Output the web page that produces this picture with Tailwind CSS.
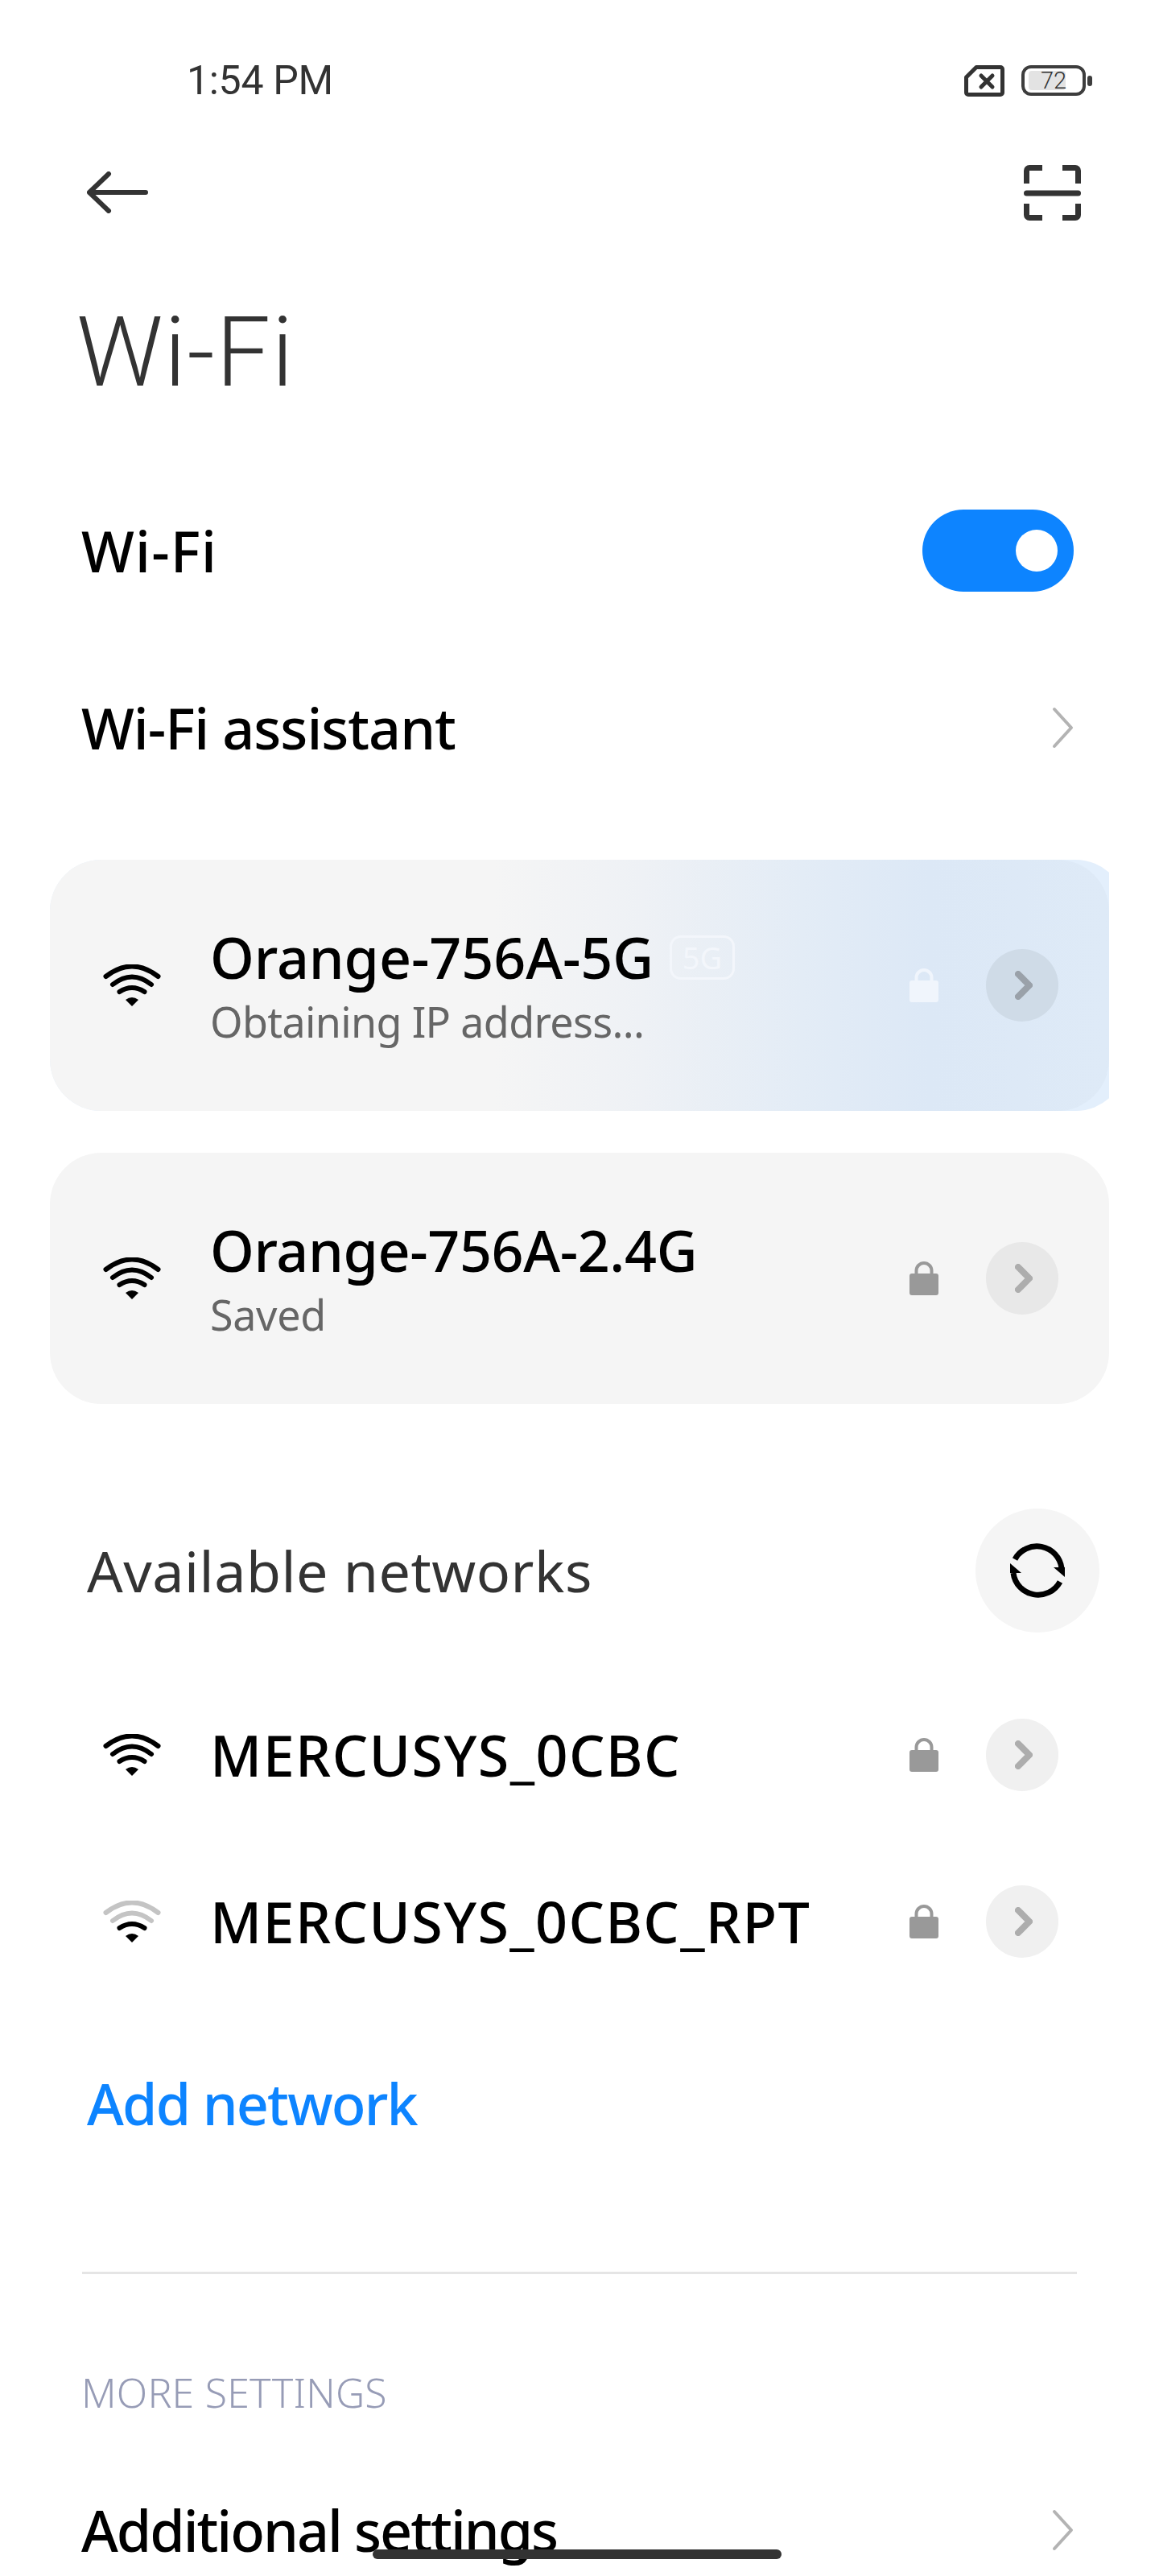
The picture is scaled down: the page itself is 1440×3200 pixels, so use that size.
<!DOCTYPE html>
<html lang="en">
<head>
<meta charset="UTF-8">
<title>Wi-Fi</title>
<script src="https://cdn.jsdelivr.net/npm/@tailwindcss/browser@4"></script>
</head>
<body class="bg-white">
<div class="relative w-[1440px] h-[3200px] overflow-hidden bg-white font-['Noto_Sans',sans-serif] text-black">

  <!-- status bar -->
  <div class="flex items-center justify-between h-[200px] pl-[232px] pr-[83px]">
    <span class="font-['Roboto',sans-serif] text-[50px] leading-none tracking-[-0.3px] text-[#333]">1:54 PM</span>
    <div class="flex items-center gap-[21px]">
      <svg width="50" height="39" viewBox="0 0 50 39" fill="none" stroke="#333" stroke-width="5"><path d="M15 2.500H45a2.500 2.500 0 0 1 2.500 2.500V34a2.500 2.500 0 0 1-2.500 2.500H5A2.500 2.500 0 0 1 2.500 34V15Z" stroke-linejoin="round"/><path d="M21 13L35 27M35 13L21 27" stroke-linecap="round"/></svg>
      <div class="flex items-center gap-[2px]">
        <div class="relative w-[80px] h-[38px] rounded-[12px] border-[4px] border-[#3d3d3d]">
          <div class="absolute left-[5px] top-[3px] w-[46px] h-[24px] rounded-[4px] bg-[#e3e3e3]"></div>
          <span class="absolute left-[20px] top-0 h-[30px] font-['Roboto',sans-serif] font-light text-[29px] leading-[30px] text-[#333]">72</span>
        </div>
        <div class="w-[6px] h-[13px] rounded-full bg-[#3d3d3d]"></div>
      </div>
    </div>
  </div>

  <!-- toolbar -->
  <div class="flex items-center justify-between h-[78px] pl-[108px] pr-[97px]">
    <svg width="76" height="52" viewBox="0 0 76 52" fill="none" stroke="#333" stroke-width="6" stroke-linecap="round" stroke-linejoin="round"><path d="M3 26H73M27 3L3 26L27 49"/></svg>
    <svg width="71" height="69" viewBox="0 0 71 69" fill="none" stroke="#333" stroke-width="7"><path d="M23 3.500H7a3.500 3.500 0 0 0-3.500 3.500V23M48 3.500H64a3.500 3.500 0 0 1 3.500 3.500V23M23 65.500H7a3.500 3.500 0 0 1-3.500-3.500V48M48 65.500H64a3.500 3.500 0 0 0 3.500-3.500V48"/><path d="M3.500 35H67.500" stroke-linecap="round"/></svg>
  </div>

  <!-- title -->
  <div class="h-[296px] pt-[88px] pl-[95px]">
    <h1 class="font-['Roboto',sans-serif] font-light text-[120px] leading-[144px] tracking-[1.500px] text-[#333]">Wi-Fi</h1>
  </div>

  <!-- wifi toggle -->
  <div class="flex items-center justify-between h-[220px] pl-[101px] pr-[106px]">
    <span class="text-[70px] leading-none font-medium tracking-[1.200px]">Wi-Fi</span>
    <div class="flex items-center justify-end w-[188px] h-[102px] pr-[20px] rounded-full bg-[#0d84ff]">
      <div class="w-[52px] h-[52px] rounded-full bg-white"></div>
    </div>
  </div>

  <!-- assistant -->
  <div class="flex items-center justify-between h-[220px] pl-[101px] pr-[106px]">
    <span class="text-[70px] leading-none font-medium tracking-[-1px]">Wi-Fi assistant</span>
    <svg width="27" height="52" viewBox="0 0 27 52" fill="none" stroke="#b3b3b3" stroke-width="4" stroke-linecap="round" stroke-linejoin="round"><path d="M3 3L24 26L3 49"/></svg>
  </div>

  <!-- connecting network -->
  <div class="relative ml-[62px] mt-[54px] w-[1316px] h-[312px] overflow-hidden">
    <div class="absolute inset-y-0 left-0 right-[-22px] rounded-[64px] bg-[#e3effc]"></div>
    <div class="absolute inset-0 rounded-[64px] bg-[linear-gradient(90deg,#f5f5f5_0%,#f5f5f5_42%,#eef1f5_56%,#e3ecf6_71%,#dce8f6_83%,#deeaf7_100%)]"></div>
    <div class="relative flex items-center h-full pl-[66px] pr-[63px]">
      <svg class="shrink-0" width="72" height="52" viewBox="0 0 72 52" fill="none" stroke="#000" stroke-width="6" stroke-linecap="round"><path d="M3.500 15Q36 -10 68.500 15M12 25Q36 6 60 25M20.500 34Q36 24 51.500 34"/><path d="M28 44Q36 38 44 44L36 52Z" fill="#000" stroke="none"/></svg>
      <div class="ml-[61px] flex-1 pt-[7px]">
        <div class="flex items-center h-[76px]">
          <span class="text-[70px] leading-none font-medium tracking-[-0.1px]">Orange-756A-5G</span>
          <span class="ml-[20px] flex items-center justify-center w-[81px] h-[55px] rounded-[14px] border-[3px] border-[#f3f6fb] text-[38px] leading-none text-[#f3f6fb]">5G</span>
        </div>
        <div class="mt-[7px] text-[52px] leading-[70px] tracking-[-0.65px] text-[#666]">Obtaining IP address...</div>
      </div>
      <svg class="shrink-0 mr-[59px]" width="36" height="42" viewBox="0 0 36 42" fill="#f0f5fc"><path d="M8.500 17V11.500a9.500 9.500 0 0 1 19 0V17" fill="none" stroke="#f0f5fc" stroke-width="4"/><rect x="0" y="15" width="36" height="27" rx="3"/></svg>
      <div class="shrink-0 flex items-center justify-center w-[90px] h-[90px] rounded-full bg-[#cfdbe7]">
        <svg class="ml-[4px]" width="22" height="36" viewBox="0 0 22 36" fill="none" stroke="#9aa1a9" stroke-width="8" stroke-linecap="round" stroke-linejoin="round"><path d="M4 4L18 18L4 32"/></svg>
      </div>
    </div>
  </div>

  <!-- saved network -->
  <div class="flex items-center ml-[62px] mt-[52px] w-[1316px] h-[312px] pl-[66px] pr-[63px] rounded-[64px] bg-[#f5f5f5]">
    <svg class="shrink-0" width="72" height="52" viewBox="0 0 72 52" fill="none" stroke="#000" stroke-width="6" stroke-linecap="round"><path d="M3.500 15Q36 -10 68.500 15M12 25Q36 6 60 25M20.500 34Q36 24 51.500 34"/><path d="M28 44Q36 38 44 44L36 52Z" fill="#000" stroke="none"/></svg>
    <div class="ml-[61px] flex-1 pt-[7px]">
      <div class="flex items-center h-[76px]"><span class="text-[70px] leading-none font-medium tracking-[-0.4px]">Orange-756A-2.4G</span></div>
      <div class="mt-[7px] text-[52px] leading-[70px] tracking-[-0.3px] text-[#666]">Saved</div>
    </div>
    <svg class="shrink-0 mr-[59px]" width="36" height="42" viewBox="0 0 36 42" fill="#999"><path d="M8.500 17V11.500a9.500 9.500 0 0 1 19 0V17" fill="none" stroke="#999" stroke-width="4"/><rect x="0" y="15" width="36" height="27" rx="3"/></svg>
    <div class="shrink-0 flex items-center justify-center w-[90px] h-[90px] rounded-full bg-[#e8e8e8]">
      <svg class="ml-[4px]" width="22" height="36" viewBox="0 0 22 36" fill="none" stroke="#adadad" stroke-width="8" stroke-linecap="round" stroke-linejoin="round"><path d="M4 4L18 18L4 32"/></svg>
    </div>
  </div>

  <!-- available networks -->
  <div class="flex items-center justify-between mt-[130px] h-[154px] pl-[108px] pr-[74px]">
    <span class="text-[70px] leading-none tracking-[0.5px] text-[#333]">Available networks</span>
    <div class="flex items-center justify-center w-[154px] h-[154px] rounded-full bg-[#f5f5f5]">
      <svg width="70" height="70" viewBox="0 0 70 70" fill="none" stroke="#000" stroke-width="7"><path d="M7 21A31 31 0 0 1 65 32"/><path d="M55 31L69 43V31Z" fill="#000" stroke="none"/><path d="M63 49A31 31 0 0 1 5 38"/><path d="M1 26L15 38H1Z" fill="#000" stroke="none"/></svg>
    </div>
  </div>

  <!-- network rows -->
  <div class="mt-[48px] flex items-center h-[207px] pl-[128px] pr-[125px]">
    <svg class="shrink-0" width="72" height="52" viewBox="0 0 72 52" fill="none" stroke="#000" stroke-width="6" stroke-linecap="round"><path d="M3.500 15Q36 -10 68.500 15M12 25Q36 6 60 25M20.500 34Q36 24 51.500 34"/><path d="M28 44Q36 38 44 44L36 52Z" fill="#000" stroke="none"/></svg>
    <span class="ml-[61px] flex-1 text-[70px] leading-none font-medium tracking-[1.400px]">MERCUSYS_0CBC</span>
    <svg class="shrink-0 mr-[59px]" width="36" height="42" viewBox="0 0 36 42" fill="#999"><path d="M8.500 17V11.500a9.500 9.500 0 0 1 19 0V17" fill="none" stroke="#999" stroke-width="4"/><rect x="0" y="15" width="36" height="27" rx="3"/></svg>
    <div class="shrink-0 flex items-center justify-center w-[90px] h-[90px] rounded-full bg-[#f0f0f0]">
      <svg class="ml-[4px]" width="22" height="36" viewBox="0 0 22 36" fill="none" stroke="#adadad" stroke-width="8" stroke-linecap="round" stroke-linejoin="round"><path d="M4 4L18 18L4 32"/></svg>
    </div>
  </div>
  <div class="flex items-center h-[207px] pl-[128px] pr-[125px]">
    <svg class="shrink-0" width="72" height="52" viewBox="0 0 72 52" fill="none" stroke="#c4c4c4" stroke-width="6" stroke-linecap="round"><path d="M3.500 15Q36 -10 68.500 15M12 25Q36 6 60 25"/><path d="M20.500 34Q36 24 51.500 34" stroke="#000"/><path d="M28 44Q36 38 44 44L36 52Z" fill="#000" stroke="none"/></svg>
    <span class="ml-[61px] flex-1 text-[70px] leading-none font-medium tracking-[1.350px]">MERCUSYS_0CBC_RPT</span>
    <svg class="shrink-0 mr-[59px]" width="36" height="42" viewBox="0 0 36 42" fill="#999"><path d="M8.500 17V11.500a9.500 9.500 0 0 1 19 0V17" fill="none" stroke="#999" stroke-width="4"/><rect x="0" y="15" width="36" height="27" rx="3"/></svg>
    <div class="shrink-0 flex items-center justify-center w-[90px] h-[90px] rounded-full bg-[#f0f0f0]">
      <svg class="ml-[4px]" width="22" height="36" viewBox="0 0 22 36" fill="none" stroke="#adadad" stroke-width="8" stroke-linecap="round" stroke-linejoin="round"><path d="M4 4L18 18L4 32"/></svg>
    </div>
  </div>

  <!-- add network -->
  <div class="mt-[63px] flex items-center h-[120px] pl-[108px]">
    <span class="text-[70px] leading-none font-medium tracking-[-1.800px] text-[#0d84ff]">Add network</span>
  </div>

  <div class="mt-[149px] mx-[102px] h-[3px] bg-[#e5e5e5]"></div>

  <div class="mt-[117px] flex items-center h-[60px] pl-[101px]">
    <span class="text-[50px] leading-none font-light tracking-[0.2px] text-[#979cb6]">MORE SETTINGS</span>
  </div>

  <div class="mt-[81px] flex items-center justify-between h-[120px] pl-[101px] pr-[106px]">
    <span class="text-[70px] leading-none font-medium tracking-[-2px]">Additional settings</span>
    <svg width="27" height="52" viewBox="0 0 27 52" fill="none" stroke="#b3b3b3" stroke-width="4" stroke-linecap="round" stroke-linejoin="round"><path d="M3 3L24 26L3 49"/></svg>
  </div>

  <!-- gesture bar -->
  <div class="absolute left-[463px] top-[3167px] w-[508px] h-[12px] rounded-full bg-[#333]"></div>
</div>
</body>
</html>
